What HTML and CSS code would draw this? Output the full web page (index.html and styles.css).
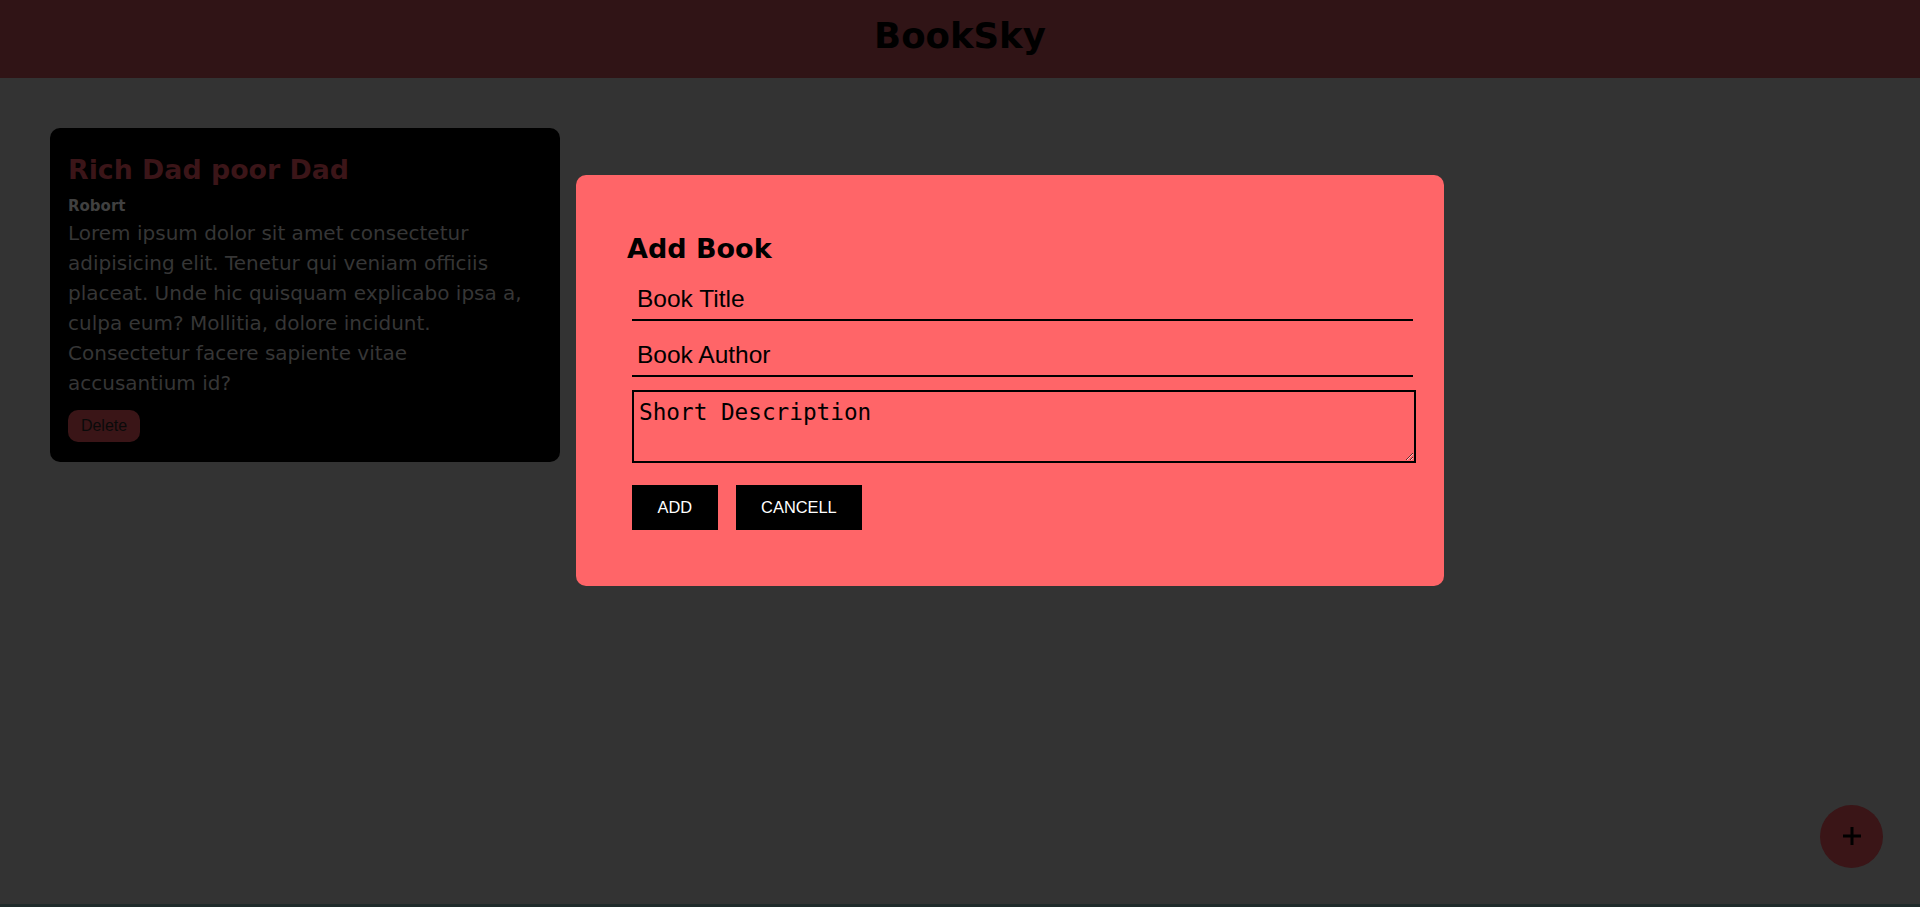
FILE: index.html
```html
<!DOCTYPE html>
<html lang="en">
<head>
<meta charset="utf-8">
<title>BookSky</title>
<link rel="stylesheet" href="styles.css">
</head>
<body>
<div class="page">
  <header class="topbar">
    <h1 class="brand">BookSky</h1>
  </header>
  <main class="content">
    <article class="card">
      <h2 class="card-title">Rich Dad poor Dad</h2>
      <div class="card-author">Robort</div>
      <p class="card-desc">Lorem ipsum dolor sit amet consectetur adipisicing elit. Tenetur qui veniam officiis placeat. Unde hic quisquam explicabo ipsa a, culpa eum? Mollitia, dolore incidunt. Consectetur facere sapiente vitae accusantium id?</p>
      <button class="btn-delete">Delete</button>
    </article>
  </main>
  <footer class="footer"></footer>
</div>

<div class="modal">
  <h2 class="modal-title">Add Book</h2>
  <form class="form">
    <input class="field field-first" type="text" placeholder="Book Title">
    <input class="field" type="text" placeholder="Book Author">
    <textarea class="desc" placeholder="Short Description"></textarea>
    <div class="actions">
      <button type="button" class="btn">ADD</button>
      <button type="button" class="btn">CANCELL</button>
    </div>
  </form>
</div>

<button class="fab" aria-label="Add book">
  <svg width="18" height="18" viewBox="0 0 18 18"><path d="M9 0V18M0 9H18" stroke="#000" stroke-width="3"/></svg>
</button>
</body>
</html>
```

FILE: styles.css
```css
* { box-sizing: border-box; }

html, body {
  margin: 0;
  padding: 0;
}

body {
  background: #333333;
  font-family: "DejaVu Sans", "Liberation Sans", sans-serif;
}

.page {
  display: flex;
  flex-direction: column;
  min-height: 100vh;
}

.topbar {
  height: 78px;
  background: #301416;
  display: flex;
  justify-content: center;
  flex: none;
}

.brand {
  margin: 0;
  font-family: "DejaVu Sans", sans-serif;
  font-weight: bold;
  font-size: 35.5px;
  line-height: 71px;
  color: #000;
}

.content {
  flex: 1;
  padding: 50px;
  display: flex;
  align-items: flex-start;
}

.footer {
  height: 3px;
  background: #1f2a2a;
  flex: none;
}

.card {
  width: 510px;
  background: #000;
  border-radius: 10px;
  padding: 24px 23px 20px 18px;
}

.card-title {
  margin: 0;
  font-size: 26.8px;
  line-height: 36px;
  font-weight: bold;
  color: #3b1518;
}

.card-author {
  margin-top: 8px;
  font-size: 15px;
  line-height: 20px;
  font-weight: bold;
  color: #404040;
}

.card-desc {
  margin: 2px 0 0 0;
  font-size: 20px;
  line-height: 30px;
  color: #363636;
}

.btn-delete {
  margin-top: 12px;
  height: 32px;
  width: 72px;
  padding: 0;
  border: none;
  border-radius: 10px;
  background: #3a1517;
  color: #0a0a0a;
  font-family: "Liberation Sans", Arial, sans-serif;
  font-size: 16px;
  display: block;
}

.modal {
  position: fixed;
  left: 576px;
  top: 175px;
  width: 868px;
  height: 411px;
  background: #ff6568;
  border-radius: 10px;
  padding: 57px 0 0 51px;
}

.modal-title {
  margin: 0;
  font-size: 27px;
  line-height: 34px;
  font-weight: bold;
  color: #000;
}

.form {
  margin-left: 5px;
  display: flex;
  flex-direction: column;
  align-items: flex-start;
}

.field {
  display: block;
  width: 781px;
  height: 43px;
  margin-top: 13px;
  padding: 0 5px;
  border: none;
  border-bottom: 2px solid #000;
  background: transparent;
  font-family: "Liberation Sans", Arial, sans-serif;
  font-size: 24.5px;
  color: #000;
  outline: none;
}

.field-first {
  margin-top: 12px;
}

.field::placeholder,
.desc::placeholder {
  color: #000;
  opacity: 1;
}

.desc {
  display: block;
  width: 784px;
  height: 73px;
  margin-top: 13px;
  padding: 7px 5px;
  border: 2px solid #000;
  background: transparent;
  font-family: "DejaVu Sans Mono", "Liberation Mono", monospace;
  font-size: 22.7px;
  line-height: 1.164;
  color: #000;
  outline: none;
}

.actions {
  margin-top: 22px;
  display: flex;
  gap: 18px;
}

.btn {
  height: 45px;
  padding: 0 25.5px;
  border: none;
  background: #000;
  color: #fff;
  font-family: "Liberation Sans", Arial, sans-serif;
  font-size: 16.4px;
}

.fab {
  position: fixed;
  right: 37px;
  bottom: 39px;
  width: 63px;
  height: 63px;
  border-radius: 50%;
  border: none;
  padding: 0 0 2px 0;
  background: #3a1517;
  display: flex;
  align-items: center;
  justify-content: center;
}

.fab svg {
  display: block;
}
```
